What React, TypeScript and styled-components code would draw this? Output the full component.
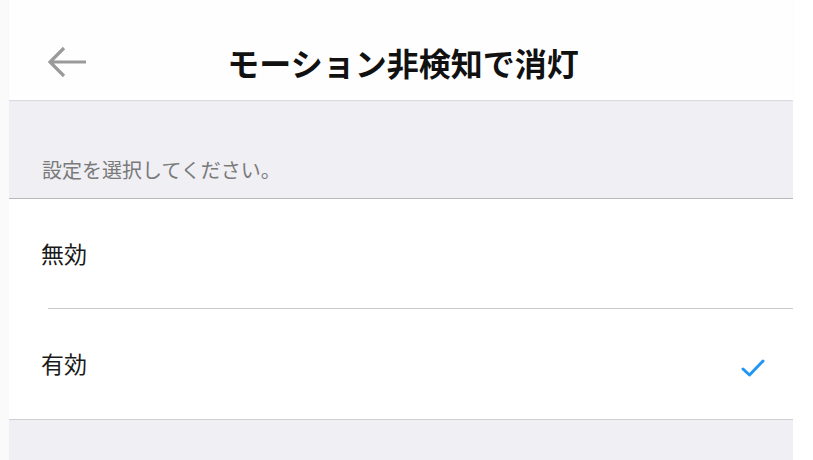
import React from "react";
import styled, { createGlobalStyle } from "styled-components";

const Global = createGlobalStyle`
  html, body { margin: 0; padding: 0; background: #ffffff; }
  body { font-family: "Noto Sans CJK JP", "Noto Sans", sans-serif; }
`;

const Page = styled.div`
  display: flex;
  width: 813px;
  height: 460px;
  overflow: hidden;
  background: #ffffff;
`;

const Gutter = styled.div`
  width: 9px;
  flex: none;
  background: #fafafa;
`;

const Panel = styled.div`
  width: 784px;
  flex: none;
  display: flex;
  flex-direction: column;
  background: #efeff4;
`;

const Header = styled.header`
  height: 100px;
  flex: none;
  display: grid;
  grid-template-columns: 100px 1fr 100px;
  align-items: center;
  padding-top: 24px;
  box-sizing: border-box;
  background: #fefefe;
  box-shadow: 0 1px 1px rgba(0, 0, 0, 0.08);
  position: relative;
  z-index: 1;
`;

const BackButton = styled.button`
  border: none;
  background: transparent;
  padding: 0 0 0 37px;
  margin: 0;
  height: 40px;
  display: flex;
  align-items: center;
  justify-content: flex-start;
  cursor: pointer;
`;

const Title = styled.h1`
  margin: 0;
  text-align: center;
  font-size: 32px;
  font-weight: 700;
  color: #111111;
  letter-spacing: 0;
  line-height: 1;
  padding-left: 4px;
`;

const SectionHeader = styled.div`
  height: 99px;
  flex: none;
  display: flex;
  align-items: flex-end;
  padding: 0 0 14px 33px;
  box-sizing: border-box;
  font-size: 20px;
  color: #7a7a7a;
  border-bottom: 1px solid #b9b9b9;
`;

const List = styled.div`
  background: #ffffff;
  border-bottom: 1px solid #cfcfcf;
  display: flex;
  flex-direction: column;
`;

const Row = styled.div<{ $divider?: boolean }>`
  height: 110px;
  display: flex;
  align-items: center;
  justify-content: space-between;
  padding: 0 28px 0 32px;
  box-sizing: border-box;
  font-size: 23px;
  color: #1a1a1a;
  position: relative;
  ${(p) =>
    p.$divider &&
    `
    &::after {
      content: "";
      position: absolute;
      left: 39px;
      right: 0;
      bottom: 0;
      height: 1px;
      background: #c8c8c8;
    }
  `}
`;

const Label = styled.span`
  line-height: 1;
  margin-top: -1px;
`;

const Check = styled.svg`
  width: 24px;
  height: 20px;
  margin-top: 8px;
`;

const Options = [
  { label: "無効", selected: false },
  { label: "有効", selected: true },
];

export default function App() {
  return (
    <Page>
      <Global />
      <Gutter />
      <Panel>
        <Header>
          <BackButton aria-label="back">
            <svg width="42" height="34" viewBox="0 0 42 34" fill="none">
              <path
                d="M40 17H4M18 3L4 17l14 14"
                stroke="#9a9a9a"
                strokeWidth="3.2"
                strokeLinecap="butt"
                strokeLinejoin="miter"
              />
            </svg>
          </BackButton>
          <Title>モーション非検知で消灯</Title>
          <div />
        </Header>
        <SectionHeader>設定を選択してください。</SectionHeader>
        <List>
          {Options.map((o, i) => (
            <Row key={o.label} $divider={i < Options.length - 1}>
              <Label>{o.label}</Label>
              {o.selected && (
                <Check viewBox="0 0 24 20" fill="none">
                  <path
                    d="M2 11l6.5 6L22 3"
                    stroke="#2196f3"
                    strokeWidth="3"
                    strokeLinecap="round"
                    strokeLinejoin="round"
                  />
                </Check>
              )}
            </Row>
          ))}
        </List>
      </Panel>
    </Page>
  );
}
